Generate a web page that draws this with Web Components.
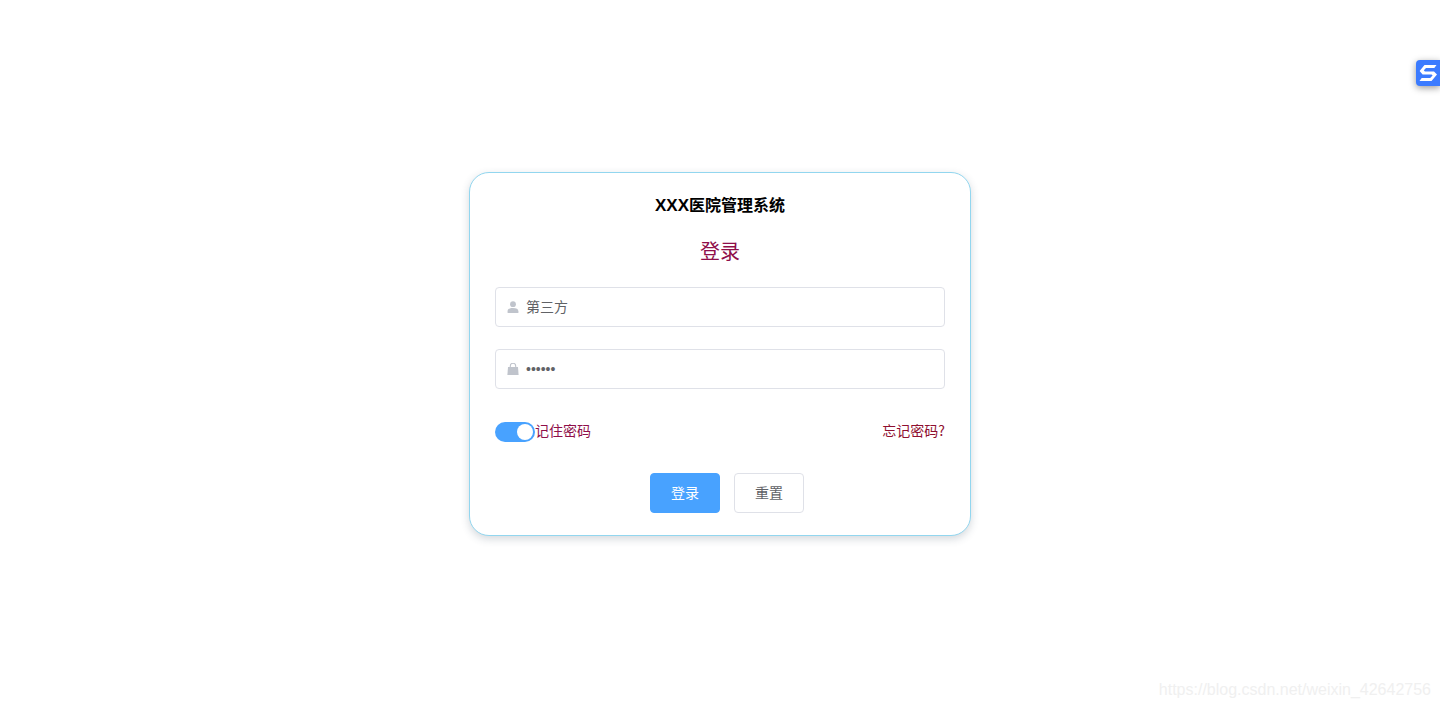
<!DOCTYPE html>
<html lang="zh"><head><meta charset="utf-8"><title>登录</title>
<style>
html,body{margin:0;height:100%;background:#fff}
body{font-family:"Noto Sans CJK SC","Liberation Sans",sans-serif;}
</style></head><body>
<login-page>
  <login-card>
    <card-title slot="title"><span style="font:700 17px 'Liberation Sans',sans-serif">XXX</span>医院管理系统</card-title>
    <card-heading slot="heading">登录</card-heading>
    <text-field slot="user" icon="user">第三方</text-field>
    <text-field slot="pass" icon="lock" secret>••••••</text-field>
    <toggle-switch slot="remember">记住密码</toggle-switch>
    <link-text slot="forgot">忘记密码?</link-text>
    <ui-button slot="actions" primary>登录</ui-button>
    <ui-button slot="actions">重置</ui-button>
  </login-card>
</login-page>
<script>
function def(name, html, init){
  customElements.define(name, class extends HTMLElement{
    constructor(){super();this.attachShadow({mode:'open'}).innerHTML=html; }
    connectedCallback(){ if(init) init(this); }
  });
}
def('login-page',`<style>
:host{display:flex;align-items:center;justify-content:center;height:708px;overflow:hidden;position:relative}
.wm{position:absolute;right:9px;top:678px;font:16px/24px "Liberation Sans",sans-serif;color:#f0f0f0;white-space:nowrap}
.tab{position:absolute;left:1416px;top:60px;width:24px;height:26px;background:#3b7bff;border-radius:4px 0 0 4px;box-shadow:0 2px 7px rgba(0,0,0,.4);display:flex;align-items:center;justify-content:center}
</style><slot></slot>
<div class="tab"><svg width="20" height="18" viewBox="0 0 20 18" fill="#fff"><path d="M6.5 1H18.5L16.3 4H8L5.8 6.2 6.9 7.4H16L19 10.6 13.5 17H1.5L3.7 14H12.2L14.6 11.4 13.6 10.4H4.6L1.6 7z"/></svg></div>
<div class="wm">https://blog.csdn.net/weixin_42642756</div>`);
def('login-card',`<style>
:host{display:block;box-sizing:border-box;width:502px;height:364px;padding:20px 25px 22px;background:#fff;border:1px solid #92d6ef;border-radius:20px;box-shadow:0 3px 8px rgba(40,60,80,.2)}
.f1{margin-top:22px}.f2{margin-top:22px}
.row{display:flex;justify-content:space-between;align-items:center;margin-top:33px;height:20px}
.actions{display:flex;justify-content:center;margin-top:31px}
::slotted(ui-button){margin-left:14px}
</style>
<slot name="title"></slot><slot name="heading"></slot>
<div class="f1"><slot name="user"></slot></div>
<div class="f2"><slot name="pass"></slot></div>
<div class="row"><slot name="remember"></slot><slot name="forgot"></slot></div>
<div class="actions"><slot name="actions"></slot></div>`);
def('card-title',`<style>:host{display:block;font-size:16px;font-weight:700;line-height:22px;height:22px;text-align:center;color:#000}</style><slot></slot>`);
def('card-heading',`<style>:host{display:block;margin-top:22px;font-size:20px;line-height:28px;text-align:center;color:#8f0f4a}</style><slot></slot>`);
const icons={
 user:`<svg width="12" height="12" viewBox="0 0 12 12" fill="#c0c4cc"><circle cx="6" cy="3.2" r="2.9"/><path d="M.6 12V10.2C.6 8 2.6 7 6 7s5.4 1 5.4 3.2V12z"/></svg>`,
 lock:`<svg width="12" height="12" viewBox="0 0 12 12"><path d="M3.3 4V3a2.7 2.7 0 0 1 5.4 0v1" fill="none" stroke="#c0c4cc" stroke-width="1.1"/><path d="M1 4h10l.6 8H.4z" fill="#c0c4cc"/></svg>`
};
def('text-field',`<style>
:host{display:flex;align-items:center;box-sizing:border-box;height:40px;padding-left:11px;border:1px solid #dfe1e8;border-radius:4px;background:#fff;font-size:14px;color:#606266}
#i{display:flex;width:12px;margin-right:7px}
.t{line-height:20px;margin-top:-2px}
:host([secret]) .t{font-family:"Liberation Sans",sans-serif;margin-top:0}
</style><span id="i"></span><span class="t"><slot></slot></span>`,
 el=>{el.shadowRoot.getElementById('i').innerHTML=icons[el.getAttribute('icon')]});
def('toggle-switch',`<style>
:host{display:inline-flex;align-items:center;font-size:14px;line-height:20px;color:#8f0f4a}
.s{display:block;position:relative;width:40px;height:20px;border-radius:10px;background:#48a2ff}
.k{position:absolute;right:2px;top:2px;width:16px;height:16px;border-radius:50%;background:#fff}
.l{margin-top:-4px}
</style><span class="s"><span class="k"></span></span><span class="l"><slot></slot></span>`);
def('link-text',`<style>:host{display:inline-block;font-size:14px;line-height:20px;color:#8f0f30;position:relative;top:-2px}</style><slot></slot>`);
def('ui-button',`<style>
:host{display:inline-flex;align-items:center;justify-content:center;box-sizing:border-box;width:70px;height:40px;border:1px solid #dfe1e8;border-radius:4px;background:#fff;color:#606266;font-size:14px}
:host([primary]){background:#48a2ff;border-color:#48a2ff;color:#fff}
span{margin-top:-2px}
</style><span><slot></slot></span>`);
</script>
</body></html>
